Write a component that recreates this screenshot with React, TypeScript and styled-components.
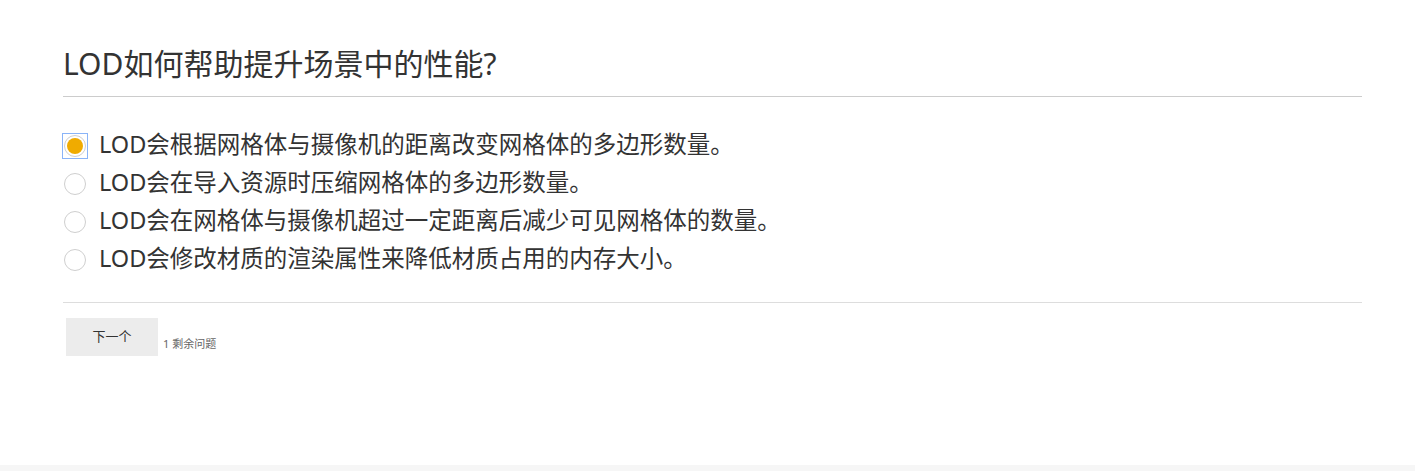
import React, { useState } from 'react';
import styled, { createGlobalStyle } from 'styled-components';

const GlobalStyle = createGlobalStyle`
  html, body {
    margin: 0;
    padding: 0;
    background: #ffffff;
  }
  body {
    font-family: 'Noto Sans', 'Noto Sans CJK SC', sans-serif;
    color: #333333;
  }
`;

const Page = styled.div`
  min-height: 465px;
  padding: 44px 53px 0 63px;
  box-sizing: border-box;
`;

const Footer = styled.div`
  height: 6px;
  background: #f6f6f6;
`;

const Title = styled.h2`
  margin: 0;
  font-size: 30px;
  font-weight: 400;
  line-height: 40px;
  color: #333333;
  padding-bottom: 12px;
  border-bottom: 1px solid #cccccc;
`;

const Options = styled.div`
  display: flex;
  flex-direction: column;
  padding: 30px 0 23px;
  border-bottom: 1px solid #dddddd;
`;

const OptionRow = styled.label`
  display: flex;
  align-items: center;
  gap: 12px;
  height: 38px;
  cursor: pointer;
`;

const OptionText = styled.span`
  font-size: 23.5px;
  line-height: 30px;
  color: #333333;
  padding-bottom: 4px;
`;

const RadioBox = styled.span<{ $focused: boolean }>`
  width: 24px;
  height: 24px;
  flex-shrink: 0;
  display: flex;
  align-items: center;
  justify-content: center;
  box-sizing: border-box;
  outline: ${(p) => (p.$focused ? '1px solid #8ab4f8' : 'none')};
`;

const RadioCircle = styled.span<{ $checked: boolean }>`
  width: 22px;
  height: 22px;
  border-radius: 50%;
  box-sizing: border-box;
  border: 1px solid #cfcfcf;
  background: #ffffff;
  display: flex;
  align-items: center;
  justify-content: center;
  &::after {
    content: '';
    width: 16px;
    height: 16px;
    border-radius: 50%;
    background: ${(p) => (p.$checked ? '#f0ab00' : 'transparent')};
  }
`;

const Actions = styled.div`
  display: flex;
  align-items: flex-end;
  gap: 5px;
  padding: 15px 0 0 3px;
`;

const NextButton = styled.button`
  width: 92px;
  height: 38px;
  border: none;
  background: #ececec;
  font-family: 'Noto Sans', 'Noto Sans CJK SC', sans-serif;
  font-size: 13px;
  color: #333333;
  padding: 0 0 3px;
  cursor: pointer;
`;

const Remaining = styled.span`
  font-size: 11px;
  color: #666666;
  padding-bottom: 5px;
`;

const options = [
  'LOD会根据网格体与摄像机的距离改变网格体的多边形数量。',
  'LOD会在导入资源时压缩网格体的多边形数量。',
  'LOD会在网格体与摄像机超过一定距离后减少可见网格体的数量。',
  'LOD会修改材质的渲染属性来降低材质占用的内存大小。',
];

export default function App() {
  const [selected, setSelected] = useState(0);
  return (
    <>
      <GlobalStyle />
      <Page>
        <Title>LOD如何帮助提升场景中的性能?</Title>
        <Options>
          {options.map((text, i) => (
            <OptionRow key={i} onClick={() => setSelected(i)}>
              <RadioBox $focused={selected === i}>
                <RadioCircle $checked={selected === i} />
              </RadioBox>
              <OptionText>{text}</OptionText>
            </OptionRow>
          ))}
        </Options>
        <Actions>
          <NextButton>下一个</NextButton>
          <Remaining>1 剩余问题</Remaining>
        </Actions>
      </Page>
      <Footer />
    </>
  );
}
